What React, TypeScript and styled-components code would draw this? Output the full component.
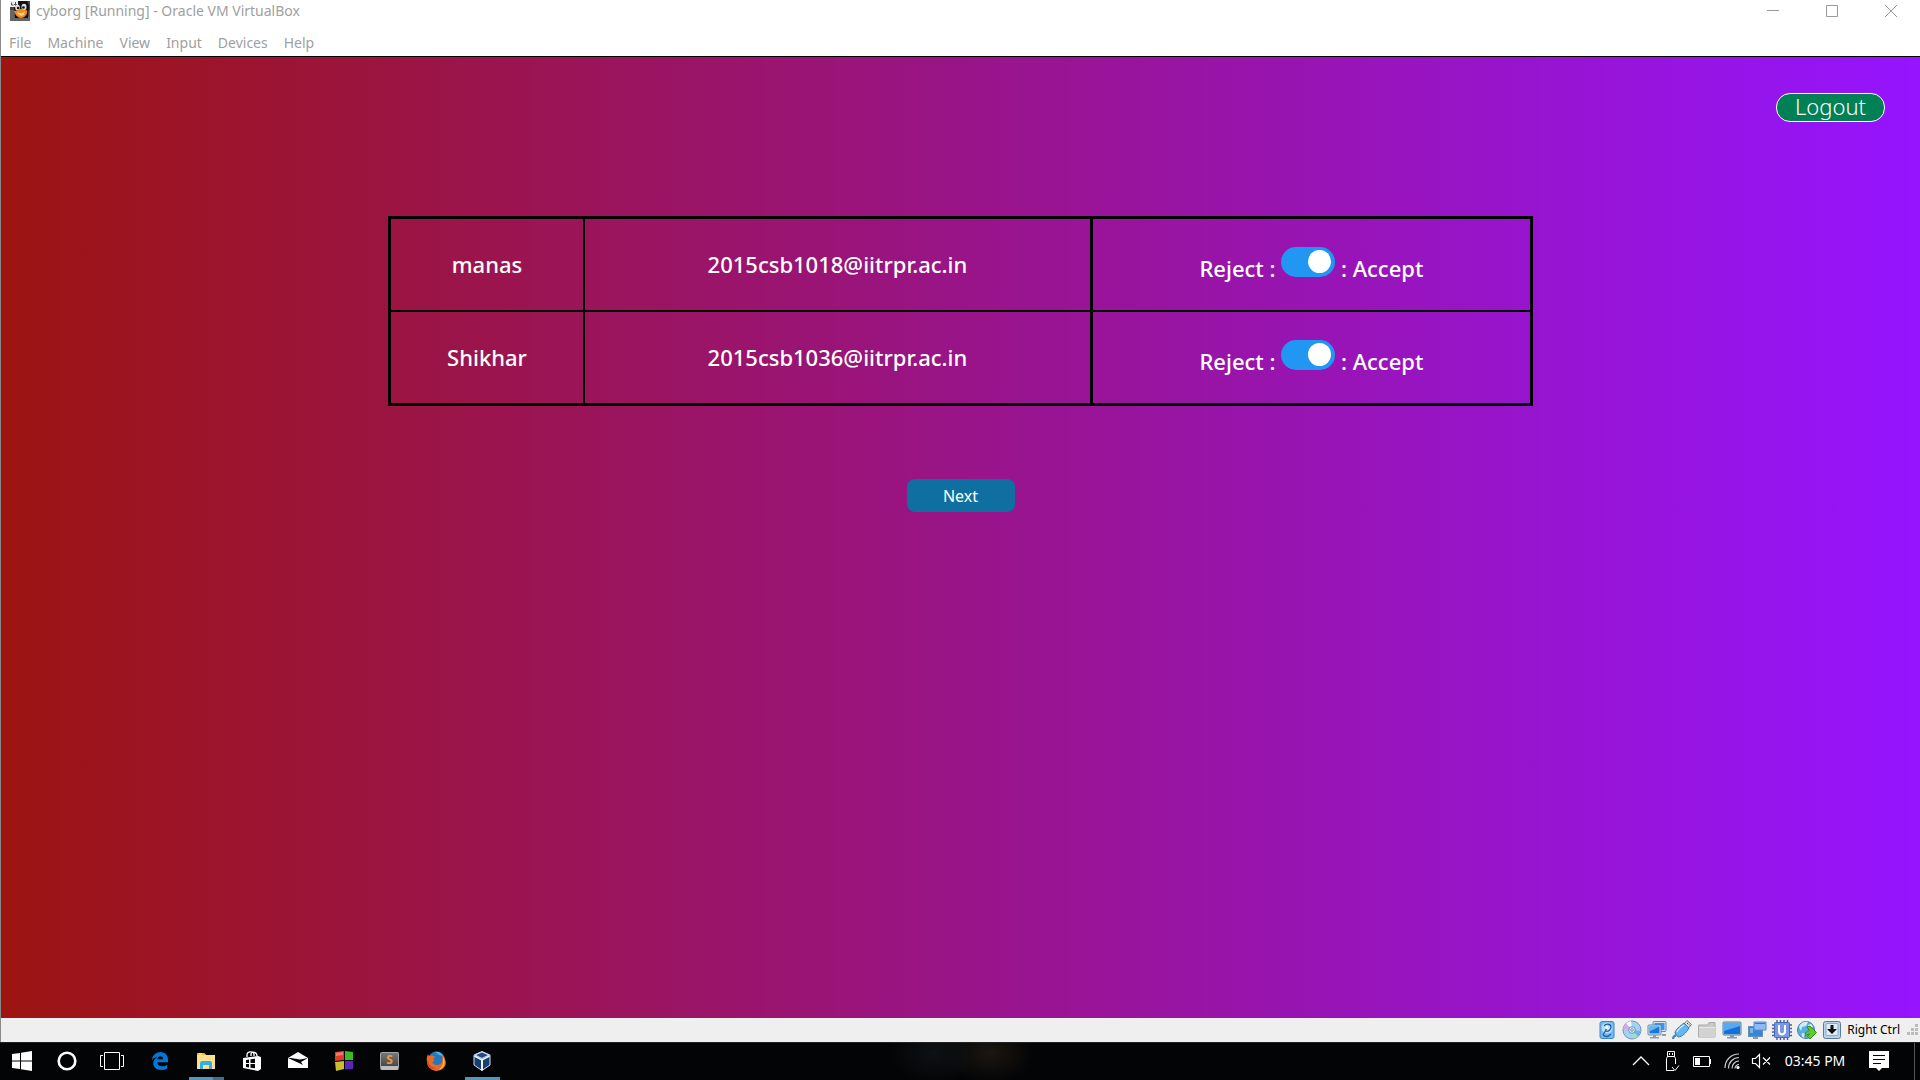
import React, { useState } from "react";
import styled, { createGlobalStyle } from "styled-components";

const GlobalStyle = createGlobalStyle`
  * { box-sizing: border-box; }
  body { margin: 0; background: #030406; font-family: "Noto Sans", "Open Sans", sans-serif; }
  button { font-family: inherit; cursor: pointer; }
`;

const Desktop = styled.div`
  display: flex;
  flex-direction: column;
  min-height: 100vh;
`;

const VmWindow = styled.div`
  display: flex;
  flex-direction: column;
  flex: 1;
  border-left: 1px solid #8a8a8a;
  background: #fff;
`;

const TitleBar = styled.header`
  display: flex;
  align-items: center;
  justify-content: space-between;
  height: 24px;
  padding: 0 20px 2px 9px;
  color: #a0a0a0;
`;

const Title = styled.div`
  display: flex;
  align-items: center;
  gap: 6px;
  font-size: 14px;
  line-height: 20px;
`;

const WindowButtons = styled.div`
  display: flex;
  gap: 41px;
`;

const WindowButton = styled.button`
  display: flex;
  padding: 0;
  border: 0;
  background: none;
  color: #999;
`;

const MenuBar = styled.nav`
  display: flex;
  align-items: center;
  gap: 16px;
  height: 32px;
  padding: 6px 8px 0;
`;

const MenuItem = styled.button`
  padding: 0;
  border: 0;
  background: none;
  color: #a0a0a0;
  font-size: 14px;
  line-height: 20px;
`;

const Guest = styled.main`
  flex: 1;
  display: flex;
  flex-direction: column;
  align-items: center;
  padding: 36px 6px;
  border-top: 1px solid #000;
  background: linear-gradient(to right, #9d1411, #9614ff);
  color: #fff;
`;

const Logout = styled.button`
  align-self: flex-end;
  display: flex;
  align-items: center;
  justify-content: center;
  width: 109px;
  height: 29px;
  margin-right: 29px;
  padding: 0 0 3px;
  border: 1px solid #fff;
  border-radius: 14px;
  background: #008055;
  color: #fff;
  font-size: 22px;
  font-weight: 300;
  line-height: 24px;
`;

const Requests = styled.table`
  width: 60%;
  margin-top: 94px;
  border: 3px solid #000;
  border-spacing: 0;
  table-layout: fixed;
  font-size: 22px;
  font-weight: 500;
  line-height: 30px;
  text-align: center;
`;

const Row = styled.tr`
  & + & td { border-top: 2px solid #000; height: 93px; }
`;

const Cell = styled.td<{ $width?: string; $divider?: number }>`
  width: ${(p) => p.$width ?? "auto"};
  height: 91px;
  padding: 0 0 2px;
  border-left: ${(p) => p.$divider ?? 0}px solid #000;
  white-space: nowrap;
`;

const DecisionCell = styled(Cell)`
  padding: 0;
`;

const Decision = styled.label`
  cursor: pointer;
`;

const Toggle = styled.input`
  appearance: none;
  display: inline-block;
  width: 54px;
  height: 30px;
  margin: 0;
  padding: 3px 4px;
  border-radius: 15px;
  background: #ccc;
  cursor: pointer;

  &::before {
    content: "";
    display: block;
    width: 23px;
    height: 23px;
    border-radius: 50%;
    background: #fff;
  }
  &:checked { background: #2196f3; }
  &:checked::before { margin-left: 23px; }
`;

const Next = styled.button`
  width: 108px;
  height: 33px;
  margin-top: 73px;
  padding: 0;
  border: 0;
  border-radius: 8px;
  background: #0f6fa0;
  color: #fff;
  font-size: 16px;
  line-height: 24px;
`;

const StatusBar = styled.footer`
  display: flex;
  align-items: center;
  justify-content: flex-end;
  gap: 5px;
  height: 24px;
  padding-right: 2px;
  background: #efefef;
  color: #000;
  font-size: 12px;
`;

const HostKey = styled.span`
  margin-right: 2px;
  line-height: 20px;
`;

const TaskBar = styled.div`
  display: flex;
  justify-content: space-between;
  height: 38px;
  border-top: 1px solid #222;
  background:
    radial-gradient(closest-side, #0e1214, transparent) 890px -20px / 90px 60px no-repeat,
    radial-gradient(closest-side, #1c160f, transparent) 945px -20px / 90px 60px no-repeat,
    #030406;
`;

const Group = styled.div`
  display: flex;
`;

const Apps = styled(Group)`
  margin-left: 2px;
`;

const TaskButton = styled.button<{ $width?: number; $line?: string }>`
  display: flex;
  align-items: center;
  justify-content: center;
  width: ${(p) => p.$width ?? 46}px;
  padding: 0 1px 1px 0;
  border: 0;
  background: ${(p) => p.$line ? `${p.$line} center bottom / 35px 3px no-repeat` : "none"};
`;

const Tray = styled.div`
  display: flex;
  align-items: center;
  color: #fff;
`;

const TrayButton = styled.button<{ $width: number }>`
  display: flex;
  justify-content: center;
  width: ${(p) => p.$width}px;
  padding: 0 0 1px;
  border: 0;
  background: none;
  color: #fff;
  font-size: 14px;
  line-height: 20px;
  white-space: nowrap;
`;

const ShowDesktop = styled.button`
  align-self: stretch;
  width: 6px;
  margin-left: 12px;
  padding: 0;
  border: 0;
  border-left: 1px solid #555;
  background: none;
`;

const Icon = ({ size = 20, children }: { size?: number; children: React.ReactNode }) => (
  <svg width={size} height={size} viewBox="0 0 20 20" fill="none" aria-hidden="true">{children}</svg>
);

const TuxIcon = () => (
  <Icon>
    <rect width="20" height="20" fill="#444" />
    <path d="M0 9h20v11H0z" fill="#666" />
    <path d="M6 0h11l2 5-1 12H5L4 5z" fill="#111" />
    <path d="M0 0h8v6H0z" fill="#eee" />
    <path d="M1.500 1.500v2.500h2M5.500 1v4M4 3.500h3" stroke="#555" />
    <ellipse cx="7.500" cy="6.500" rx="2.300" ry="3" fill="#ddd" />
    <ellipse cx="14" cy="6" rx="2.500" ry="3.300" fill="#ddd" />
    <circle cx="8" cy="7" r="1.200" fill="#111" />
    <circle cx="13.500" cy="6.500" r="1.300" fill="#111" />
    <path d="M4 10c3 0 4-2 7-2s4 2 6 1c1 4-2 8-6 8-3 0-6-3-7-7z" fill="#f28a22" />
    <path d="M7 11c3 2 6 1 8-1l-1 4c-3 2-6 0-7-3z" fill="#ffd070" />
  </Icon>
);

const Disk = () => (
  <Icon>
    <rect x="3" y="1.500" width="14" height="17" rx="2" fill="#78b9ef" stroke="#3c87c9" />
    <circle cx="10" cy="8" r="5.500" fill="#b9e0fb" />
    <path d="M7 6c2-3 7-2 7 1s-3 5-5 4M10 8l-4 7M6 15c2 2 5 2 8-1" stroke="#235f9c" strokeWidth="1.300" />
    <circle cx="10" cy="7.500" r="1.500" fill="#fff" />
  </Icon>
);
const Disc = () => (
  <Icon>
    <circle cx="10" cy="10" r="9" fill="#a3d2f5" stroke="#7191b4" />
    <path d="M10 10L4 3.500A9 9 0 0 1 9 1z" fill="#f3f8ff" />
    <path d="M10 10l-9-1a9 9 0 0 1 3-5.500z" fill="#d8a9e8" />
    <path d="M10 10l6 6.500a9 9 0 0 1-5 2z" fill="#9ee4b3" />
    <path d="M10 10l9 1a9 9 0 0 1-3 5.500z" fill="#70aef0" />
    <circle cx="10" cy="10" r="3.300" fill="#e5f3fb" stroke="#5f94bd" />
    <circle cx="10" cy="10" r="1.300" fill="#fff" stroke="#6d8fae" />
  </Icon>
);
const Network = () => (
  <Icon>
    <rect x="6" y="1.500" width="13" height="10" rx="1" fill="#d4e4f0" stroke="#688dab" />
    <path d="M7.500 3h10v7h-10z" fill="#3995ea" />
    <path d="M15 14h4v2h-4z" fill="#8b9eae" />
    <rect x="1" y="5" width="13" height="10" rx="1" fill="#dbe9f4" stroke="#6187a6" />
    <path d="M2.500 6.500h10v7h-10z" fill="#1677dd" />
    <path d="M2.500 6.500h10l-10 5z" fill="#65b7fa" />
    <path d="M6 15h3v2h3v1.500H3V17h3z" fill="#879fb4" />
  </Icon>
);
const Usb = () => (
  <Icon>
    <path d="M12 4l3-3.500 4.500 4L16.500 8z" fill="#ddd" stroke="#777" />
    <path d="M15 3l1 1M17 4.500l1 1" stroke="#444" />
    <path d="M3 13c0-3 5-7 9-10l5 5c-3 5-7 9-11 9z" fill="#66b6ef" stroke="#347bb7" />
    <path d="M5 12c1-3 4-5 7-7" stroke="#c8eaff" strokeWidth="1.500" />
    <path d="M4 15c-2 1-3 2-3 4" stroke="#4083b8" strokeWidth="2" />
  </Icon>
);
const Folder = () => (
  <Icon>
    <path d="M1.500 17V5h9l1.500-2.500h6V17z" fill="#c8c8c8" stroke="#aaa" />
    <path d="M2 7h16v10H2z" fill="#d2d2d2" />
    <path d="M2 7.500h16" stroke="#e8e8e8" />
  </Icon>
);
const Display = () => (
  <Icon>
    <rect x="1" y="2" width="18" height="13" rx="1" fill="#b3d2e9" stroke="#547d9f" />
    <path d="M2 3h16v11H2z" fill="#176dda" />
    <path d="M2 3h16v3L2 11z" fill="#55aaf6" />
    <path d="M8 15h4v2h3v1.500H5V17h3z" fill="#839bb2" />
  </Icon>
);
const Capture = () => (
  <Icon>
    <rect x="1.500" y="6.500" width="14" height="10" fill="#3288df" stroke="#6c90b1" />
    <path d="M6 17h5v2H6z" fill="#889aad" />
    <path d="M7 2h12v8H7z" fill="#8ebbf7" stroke="#5c87cb" />
    <path d="M8 3.500h10" stroke="#3870cc" />
    <path d="M3 8h3v5H3z" fill="#75b6ef" />
  </Icon>
);
const Chip = () => (
  <Icon>
    <path d="M5 0v20M8.500 0v20M12 0v20M15.500 0v20M0 5h20M0 8.500h20M0 12h20M0 15.500h20" stroke="#485ca2" strokeWidth="1.400" />
    <rect x="2.500" y="2.500" width="15" height="15" rx="1" fill="#7898df" stroke="#4966b8" />
    <path d="M7 5v6c0 4.500 6 4.500 6 0V5" stroke="#fff" strokeWidth="2" />
  </Icon>
);
const Mouse = () => (
  <Icon>
    <circle cx="9" cy="10" r="8.500" fill="#55aee5" stroke="#487da7" />
    <path d="M2 7c1-4 5-6 9-5L9 6 5 7l-1 4zM5 13l4 1-2 4c-2-1-3-3-2-5z" fill="#cdebf5" />
    <path d="M11 5l3-1 2 3-4 2z" fill="#e5f6ff" />
    <path d="M10 7l3-1 6.500 6.500L13 19l-2.500-2.500 2-2.500c-2 0-3.500 1-4.500 2.500 0-4 2-5.500 4.500-6z" fill="#61c936" stroke="#368923" />
  </Icon>
);
const KeyIcon = () => (
  <Icon>
    <rect x="1.500" y="1.500" width="17" height="17" rx="2" fill="#b9d2e8" stroke="#597b9b" />
    <rect x="4" y="3.500" width="12" height="12" rx="1" fill="#e0edf8" stroke="#8da9c3" />
    <path d="M8.500 5h3v4H15l-5 5-5-5h3.500z" fill="#111" />
  </Icon>
);
const Grip = () => (
  <svg width="11" height="12" viewBox="0 0 11 12" fill="#bbb" aria-hidden="true">
    <path d="M8 0h3v3H8zM4 4h3v3H4zM8 4h3v3H8zM0 8h3v3H0zM4 8h3v3H4zM8 8h3v3H8z" />
  </svg>
);

const Windows = () => <Icon><path d="M0 3l8-1v7.500H0zM9 1.800L20 0v9.500H9zM0 10.500h8V18l-8-1zM9 10.500h11V20L9 18.200z" fill="#fff" /></Icon>;
const Cortana = () => <Icon><circle cx="10" cy="10" r="8.300" stroke="#fff" strokeWidth="2.600" /></Icon>;
const TaskView = () => (
  <svg width="24" height="20" viewBox="0 0 24 20" fill="none" stroke="#fff" aria-hidden="true">
    <path d="M4.500 1.500h15v17h-15zM3 4.500H.5v11H3M21 4.500h2.500v11H21" />
  </svg>
);
const Edge = () => (
  <Icon size={18}><path d="M1 9.500C1.500 4 5 0 10.500 0 16 0 19 4 19 9v2.500H7c.3 5 6.500 5.500 11 2.700v4C11 22 2.500 19.500 2.500 12.500c0-3 1.500-5.500 4.500-7-3 .5-5 2-6 4zM7 8h6.500c0-4.500-6-4.500-6.500 0z" fill="#0078d7" /></Icon>
);
const Explorer = () => (
  <Icon>
    <path d="M1 18V2h7l2 2h9v14z" fill="#ffe08a" />
    <path d="M1 2h7l2 2H1z" fill="#f3b52d" />
    <path d="M4 18v-6c0-1 1-2 2-2h8c1 0 2 1 2 2v6h-3v-4H7v4z" fill="#35aee7" />
    <path d="M3 3h3" stroke="#fff" />
  </Icon>
);
const Store = () => (
  <Icon>
    <path d="M1 7l15-2 3 1v12l-3 2L1 17z" fill="#fff" />
    <path d="M5 6V4c0-4 7-4 7-1v2M9 5V3c1-3 6-2 6 2" stroke="#fff" strokeWidth="1.300" />
    <path d="M4 9l3-.5V12H4zM8.500 8.200L13 7.700V12H8.500zM4 13h3v3.500L4 16zM8.500 13H13v4.200l-4.500-.5z" fill="#030406" />
  </Icon>
);
const Mail = () => <Icon><path d="M0 7l10-6 10 6v10H0z" fill="#fff" /><path d="M0 7l12 5.500 3 1.500-2-3 7-4-8 1.500L3 7z" fill="#030406" /></Icon>;
const Classic = () => (
  <Icon>
    <path d="M1 1l9-1v9l-9 1z" fill="#dc3b2e" />
    <path d="M11 0l8 1v8h-8z" fill="#3aba27" />
    <path d="M1 11l9-1v8l-8 2z" fill="#c6bd31" />
    <path d="M11 10h8v8l-8 .5z" fill="#5a25ba" />
    <path d="M2 2l7-1v3L2 5z" fill="#ef7b68" />
  </Icon>
);
const SublimeLabel = styled.span`
  display: flex;
  align-items: center;
  justify-content: center;
  width: 19px;
  height: 18px;
  border: 1px solid #a5a5a5;
  border-bottom: 4px solid #bcbcbc;
  border-radius: 2px;
  background: linear-gradient(#777, #484848);
  color: #f29a38;
  font-size: 12px;
  font-weight: 700;
  line-height: 12px;
`;
const Firefox = () => (
  <Icon>
    <circle cx="10.500" cy="9" r="8.500" fill="#2479bd" />
    <path d="M9 1c5-1 9 3 9 7-1-2-3-4-5-4z" fill="#4bb3e8" />
    <path d="M2 3c0 1 1 2 2 2 2-1 4 0 5 1L7 8c2 1 1 3-1 3 2 4 8 4 10 0 1-3 0-6-1-7 4 2 6 7 4 11-4 7-14 6-17 0C.500 11 0 7 2 3z" fill="#ef6820" />
    <path d="M17 6c3 5 2 11-4 13 2-3 4-4 4-8z" fill="#ffc832" />
    <path d="M2 8c0 5 3 9 8 9-4 2-9-1-9-6z" fill="#d8442c" />
  </Icon>
);
const Box = () => (
  <Icon>
    <path d="M10 .5l8 3.500v10l-8 5.500L2 14V4z" fill="#173e73" stroke="#d1def0" />
    <path d="M3 4l7 3.500L17 4l-7-3z" fill="#244c82" stroke="#d6e4f5" />
    <path d="M10 8v11.500" stroke="#eef5ff" strokeWidth="2" />
    <path d="M2.500 5L10 9l7.500-4" stroke="#eef5ff" strokeWidth="1.500" />
  </Icon>
);

const apps = [
  { name: "Microsoft Edge", icon: <Edge /> },
  { name: "File Explorer", icon: <Explorer />, line: "linear-gradient(to right, #5595bd 24px, #3f6f8d 24px)" },
  { name: "Store", icon: <Store /> },
  { name: "Mail", icon: <Mail /> },
  { name: "Start menu", icon: <Classic /> },
  { name: "Sublime Text", icon: <SublimeLabel>S</SublimeLabel> },
  { name: "Firefox", icon: <Firefox /> },
  { name: "VirtualBox", icon: <Box />, line: "linear-gradient(#5595bd, #5595bd)" },
];

const requests = [
  { name: "manas", email: "2015csb1018@iitrpr.ac.in" },
  { name: "Shikhar", email: "2015csb1036@iitrpr.ac.in" },
];

const RequestRow = ({ name, email }: { name: string; email: string }) => {
  const [accepted, setAccepted] = useState(true);
  return (
    <Row>
      <Cell $width="16.8%">{name}</Cell>
      <Cell $width="44.6%" $divider={2}>{email}</Cell>
      <DecisionCell $divider={3}>
        <Decision>
          Reject : <Toggle type="checkbox" checked={accepted} onChange={(e) => setAccepted(e.target.checked)} /> : Accept
        </Decision>
      </DecisionCell>
    </Row>
  );
};

export default function App() {
  return (
    <Desktop>
      <GlobalStyle />
      <VmWindow>
        <TitleBar>
          <Title><TuxIcon />cyborg [Running] - Oracle VM VirtualBox</Title>
          <WindowButtons>
            {[
              ["Minimize", "M3 10.500h12"],
              ["Maximize", "M3.500 5.500h11v11h-11z"],
              ["Close", "M3 5l12 12M15 5L3 17"],
            ].map(([name, d]) => (
              <WindowButton key={name} aria-label={name}>
                <svg width="18" height="22" viewBox="0 0 18 22" fill="none" stroke="currentColor"><path d={d} /></svg>
              </WindowButton>
            ))}
          </WindowButtons>
        </TitleBar>
        <MenuBar>
          {["File", "Machine", "View", "Input", "Devices", "Help"].map((m) => <MenuItem key={m}>{m}</MenuItem>)}
        </MenuBar>
        <Guest>
          <Logout>Logout</Logout>
          <Requests>
            <tbody>{requests.map((r) => <RequestRow key={r.name} {...r} />)}</tbody>
          </Requests>
          <Next>Next</Next>
        </Guest>
        <StatusBar>
          <Disk /><Disc /><Network /><Usb /><Folder /><Display /><Capture /><Chip /><Mouse /><KeyIcon />
          <HostKey>Right Ctrl</HostKey>
          <Grip />
        </StatusBar>
      </VmWindow>
      <TaskBar>
        <Group>
          <TaskButton $width={45} aria-label="Start"><Windows /></TaskButton>
          <TaskButton $width={45} aria-label="Cortana"><Cortana /></TaskButton>
          <TaskButton $width={45} aria-label="Task view"><TaskView /></TaskButton>
          <Apps>
            {apps.map((a) => <TaskButton key={a.name} aria-label={a.name} $line={a.line}>{a.icon}</TaskButton>)}
          </Apps>
        </Group>
        <Tray>
          <TrayButton $width={32} aria-label="Show hidden icons">
            <Icon><path d="M2 14l8-8 8 8" stroke="#fff" strokeWidth="1.300" /></Icon>
          </TrayButton>
          <TrayButton $width={30} aria-label="Safely remove hardware">
            <Icon><path d="M5.500.5h7v5h-7zM7.500 2v2M10.500 2v2M12 19.500H4.500v-12l1-2h7l1 2V13M10 16l3 3.500 4-5" stroke="#fff" /></Icon>
          </TrayButton>
          <TrayButton $width={30} aria-label="Battery">
            <Icon><path d="M1.500 5.500h16v10h-16zM18.500 8v5" stroke="#fff" /><path d="M3 7h5v7H3z" fill="#fff" /></Icon>
          </TrayButton>
          <TrayButton $width={30} aria-label="Wi-Fi">
            <Icon><path d="M3 17C3 9 9 3 17 3M6.500 17.500c0-6 4.500-11 10.500-11M10 17.500c0-4 3-7.500 7-7.500M13 17.500c0-2 2-4 4-4" stroke="#ccc" strokeWidth="1.200" /><circle cx="16" cy="16.500" r="1.600" fill="#fff" /></Icon>
          </TrayButton>
          <TrayButton $width={27} aria-label="Volume muted">
            <Icon><path d="M1.500 7.500h3l4-4v13l-4-4h-3zM12 6.500l7 7M19 6.500l-7 7" stroke="#fff" strokeWidth="1.200" /></Icon>
          </TrayButton>
          <TrayButton $width={82}>03:45 PM</TrayButton>
          <TrayButton $width={46} aria-label="Notifications">
            <Icon><path d="M0 0h20v17h-7l-3 3-3-3H0z" fill="#fff" /><path d="M4 4.500h12M4 8.500h12M4 12.500h8" stroke="#030406" /></Icon>
          </TrayButton>
          <ShowDesktop aria-label="Show desktop" />
        </Tray>
      </TaskBar>
    </Desktop>
  );
}
